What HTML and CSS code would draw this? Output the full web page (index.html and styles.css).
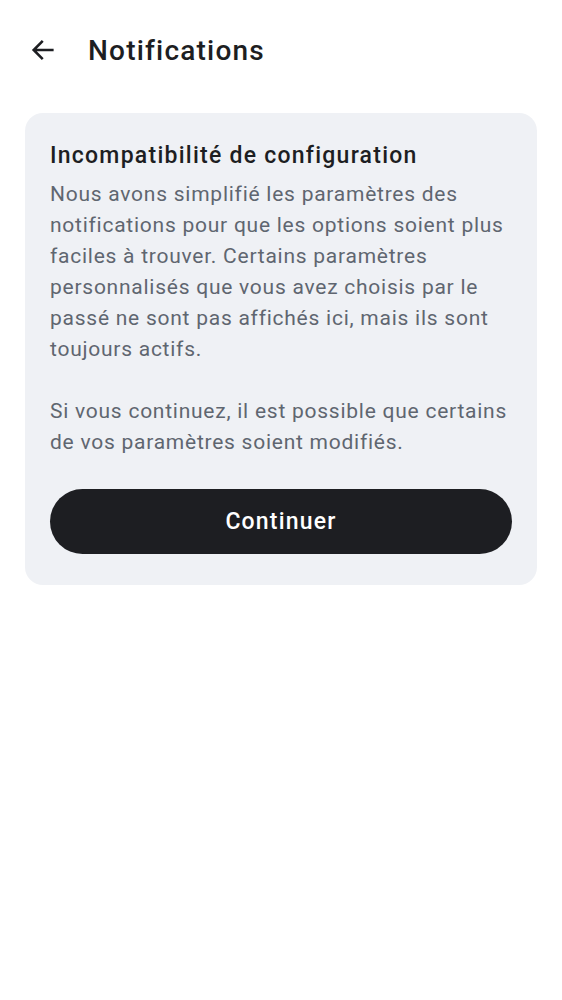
FILE: index.html
```html
<!DOCTYPE html>
<html lang="fr">
<head>
<meta charset="utf-8">
<link rel="stylesheet" href="styles.css">
</head>
<body>
<header class="topbar">
  <svg class="back" width="28" height="28" viewBox="0 0 24 24"><path d="M20 12H5M11 5l-7 7 7 7" fill="none" stroke="#1d1e22" stroke-width="2.2" stroke-linecap="square"/></svg>
  <h1 class="title">Notifications</h1>
</header>
<main class="content">
  <section class="card">
    <h2 class="card-title">Incompatibilité de configuration</h2>
    <p class="card-text">Nous avons simplifié les paramètres des notifications pour que les options soient plus faciles à trouver. Certains paramètres personnalisés que vous avez choisis par le passé ne sont pas affichés ici, mais ils sont toujours actifs.</p>
    <p class="card-text">Si vous continuez, il est possible que certains de vos paramètres soient modifiés.</p>
    <button class="btn">Continuer</button>
  </section>
</main>
</body>
</html>
```
FILE: styles.css
```css
* { box-sizing: border-box; }
body {
  margin: 0;
  background: #ffffff;
  font-family: Roboto, "Noto Sans", sans-serif;
  color: #1d1e22;
}
.topbar {
  display: flex;
  align-items: center;
  height: 100px;
  padding: 0 0 0 29px;
}
.back { flex: none; margin-right: 31px; }
.title {
  margin: 0;
  font-size: 28px;
  font-weight: 500;
  letter-spacing: 1.2px;
  color: #1d1e22;
}
.content { padding: 13px 25px 0; }
.card {
  background: #eff1f5;
  border-radius: 18px;
  padding: 27px 25px 31px;
}
.card-title {
  margin: 0 0 7px;
  font-size: 23px;
  font-weight: 500;
  line-height: 32px;
  letter-spacing: 1.25px;
  color: #1d1e22;
}
.card-text {
  margin: 0 0 31px;
  font-size: 21px;
  line-height: 31px;
  letter-spacing: 0.75px;
  color: #5f6670;
}
.btn {
  display: block;
  width: 100%;
  height: 65px;
  border: none;
  border-radius: 33px;
  background: #1d1e22;
  color: #ffffff;
  font-family: Roboto, sans-serif;
  font-size: 23px;
  font-weight: 500;
  letter-spacing: 1.2px;
}
```
